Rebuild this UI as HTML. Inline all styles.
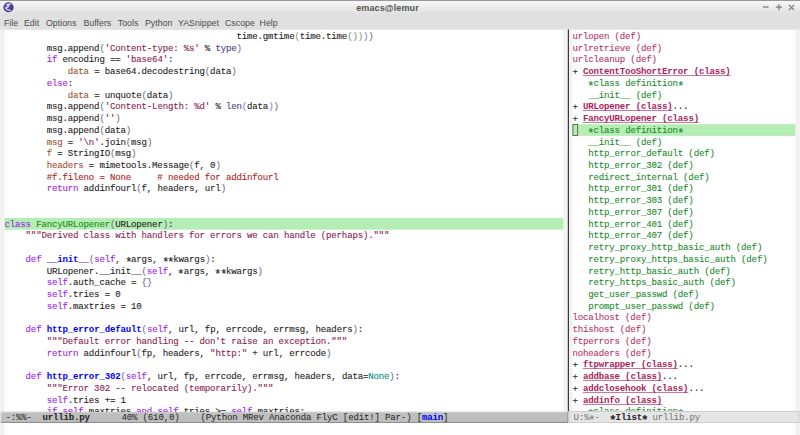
<!DOCTYPE html>
<html lang="en"><head><meta charset="utf-8"><title>emacs@lemur</title>
<style>
html,body{margin:0;padding:0}
body{width:800px;height:435px;overflow:hidden;position:relative;background:#fff;font-family:"Liberation Mono",monospace;font-size:9.1px;color:#222}
i{font-style:normal}
#ttl{position:absolute;left:327.5px;width:120px;top:2px;transform:translateY(0.6px);height:11px;line-height:11px;text-align:center;font-family:"Liberation Sans",sans-serif;font-weight:bold;font-size:9.1px;color:#555;letter-spacing:0.05px}
.mi{position:absolute;top:17px;transform:translateY(-0.5px);height:12px;line-height:12px;font-family:"Liberation Sans",sans-serif;font-size:8.8px;color:#4d4d4d;white-space:pre}
.pane{position:absolute;top:30px;height:382px;overflow:hidden}
#lp{left:4.5px;width:559px}
#rp{left:572.4px;width:223px;height:381px}
.ln{-webkit-text-stroke:0.1px;position:absolute;left:0;width:100%;height:11px;line-height:11px;white-space:pre;letter-spacing:-0.186px}
.k{color:#a020f0}
.s{color:#8b2252}
.c{color:#b22222}
.v{color:#a0522d}
.b{color:#483d8b}
.n{color:#008b8b}
.t{color:#228b22}
.f{color:#0000ff;font-weight:bold;-webkit-text-stroke:0}
.d{color:#b8336a}
.g{color:#208a2c}
.C{color:#ad1d5b;font-weight:bold;text-decoration:underline;text-decoration-color:rgba(173,29,91,0.6);text-decoration-skip-ink:none;text-decoration-thickness:1px;-webkit-text-stroke:0}
.ml{letter-spacing:-0.186px;position:absolute;top:412px;height:12px;line-height:12px;white-space:pre;box-sizing:border-box}
#ml1{left:1px;width:566.5px;padding-left:4.5px;color:#222;line-height:10px;padding-top:1px}
#ml2{left:568.5px;width:231px;padding-left:4.9px;color:#727272;line-height:10px;padding-top:1px}
.ml b{color:#222}
.ml .m{color:#0000ff;font-weight:bold}
.a{display:inline-block;transform-origin:50% 3.3px;transform:translateY(2.2px) scale(1.4)}
.p{position:relative;top:1px}

</style></head>
<body>
<svg id="bg" width="800" height="435" viewBox="0 0 800 435" style="position:absolute;left:0;top:0">
<defs><linearGradient id="tg" gradientUnits="userSpaceOnUse" x1="0" y1="0" x2="0" y2="30"><stop offset="0" stop-color="#f9f9f9"/><stop offset="0.05" stop-color="#f6f6f6"/><stop offset="0.47" stop-color="#e0e0e0"/><stop offset="1" stop-color="#e0e0e0"/></linearGradient></defs>
<rect x="0" y="0" width="800" height="29.8" fill="url(#tg)"/>
<rect x="0" y="0" width="800" height="0.9" fill="#8e8e8e"/>
<rect x="0" y="29.5" width="4.6" height="405.5" fill="#f2f2f2"/>
<rect x="563.4" y="29.5" width="4.4" height="382.3" fill="#f2f2f2"/>
<rect x="568.9" y="29.5" width="3.5" height="382.3" fill="#f2f2f2"/>
<rect x="795.4" y="29.5" width="4.6" height="405.5" fill="#f2f2f2"/>
<rect x="567.8" y="29.5" width="1.15" height="382" fill="#303030"/>
<rect x="4.6" y="217.95" width="558.8" height="11.7" fill="#b4eeb4"/>
<rect x="572.3" y="124.2" width="223.1" height="11.7" fill="#b4eeb4"/>
<rect x="572.95" y="124.5" width="4.75" height="11.1" fill="none" stroke="#3a3a3a" stroke-width="0.7"/>
<rect x="0.8" y="411.8" width="567.5" height="11.1" fill="#bfbfbf"/>
<rect x="0.8" y="411.8" width="567.5" height="0.9" fill="#d2d2d2"/>
<rect x="0.8" y="411.8" width="0.8" height="11.1" fill="#d2d2d2"/>
<rect x="0.8" y="421.9" width="567.5" height="1" fill="#8a8a8a"/>
<rect x="567.5" y="411.8" width="0.9" height="11.1" fill="#8a8a8a"/>
<rect x="568.6" y="411.2" width="230.8" height="11.6" fill="#e5e5e5"/>
<rect x="569" y="411.6" width="230" height="10.8" fill="none" stroke="#c6c6c6" stroke-width="0.8"/>
</svg>
<svg style="position:absolute;left:2.1px;top:1.2px" width="13" height="13" viewBox="0 0 13 13"><defs><radialGradient id="eg" cx="0.35" cy="0.3" r="0.8"><stop offset="0" stop-color="#6a5fc4"/><stop offset="0.6" stop-color="#4a3fa3"/><stop offset="1" stop-color="#2f2678"/></radialGradient></defs><circle cx="6.45" cy="6.25" r="5.1" fill="url(#eg)"/><path d="M8.4 3.1 L5.2 3.6 L6.7 5.3 L3.7 7 L5.4 8.8 L8.3 9.4" fill="none" stroke="#fff" stroke-opacity="0.92" stroke-width="1.15" stroke-linecap="round" stroke-linejoin="round"/></svg>
<div id="ttl">emacs@lemur</div>
<div class="mi" style="left:4px">File</div>
<div class="mi" style="left:24px">Edit</div>
<div class="mi" style="left:46px">Options</div>
<div class="mi" style="left:83.5px">Buffers</div>
<div class="mi" style="left:117.8px">Tools</div>
<div class="mi" style="left:145px">Python</div>
<div class="mi" style="left:178px">YASnippet</div>
<div class="mi" style="left:225px">Cscope</div>
<div class="mi" style="left:259.6px">Help</div>
<svg style="position:absolute;left:760px;top:1px" width="38" height="12" viewBox="0 0 38 12"><g stroke="#7a7a7a" stroke-width="1.25" fill="none"><path d="M3 6 H8.6"/><path d="M15.9 6.2 H21.9 M18.9 3.2 V9.2"/><path d="M28.9 3.9 L34.1 9.1 M34.1 3.9 L28.9 9.1"/></g></svg>

<div class="pane" id="lp">
<div class="ln" style="top:1px">                                            time.gmtime<i style="color:#909183">(</i>time.time<i style="color:#709870">(</i><i style="color:#709870">)</i><i style="color:#909183">)</i><i style="color:#7388d6">)</i><i style="color:#707183">)</i></div>
<div class="ln" style="top:13px">        msg.append<i style="color:#707183">(</i><span class="s">'Content-type: %s'</span> % <span class="b">type</span><i style="color:#707183">)</i></div>
<div class="ln" style="top:24px">        <span class="k">if</span> encoding == <span class="s">'base64'</span>:</div>
<div class="ln" style="top:36px">            <span class="v">data</span> = base64.decodestring<i style="color:#707183">(</i>data<i style="color:#707183">)</i></div>
<div class="ln" style="top:48px">        <span class="k">else</span>:</div>
<div class="ln" style="top:60px">            <span class="v">data</span> = unquote<i style="color:#707183">(</i>data<i style="color:#707183">)</i></div>
<div class="ln" style="top:71px">        msg.append<i style="color:#707183">(</i><span class="s">'Content-Length: %d'</span> % <span class="b">len</span><i style="color:#7388d6">(</i>data<i style="color:#7388d6">)</i><i style="color:#707183">)</i></div>
<div class="ln" style="top:83px">        msg.append<i style="color:#707183">(</i><span class="s">''</span><i style="color:#707183">)</i></div>
<div class="ln" style="top:95px">        msg.append<i style="color:#707183">(</i>data<i style="color:#707183">)</i></div>
<div class="ln" style="top:107px">        <span class="v">msg</span> = <span class="s">'\n'</span>.join<i style="color:#707183">(</i>msg<i style="color:#707183">)</i></div>
<div class="ln" style="top:118px">        <span class="v">f</span> = StringIO<i style="color:#707183">(</i>msg<i style="color:#707183">)</i></div>
<div class="ln" style="top:130px">        <span class="v">headers</span> = mimetools.Message<i style="color:#707183">(</i>f, 0<i style="color:#707183">)</i></div>
<div class="ln" style="top:142px">        <span class="c">#f.fileno = None     # needed for addinfourl</span></div>
<div class="ln" style="top:153px">        <span class="k">return</span> addinfourl<i style="color:#707183">(</i>f, headers, url<i style="color:#707183">)</i></div>
<div class="ln" style="top:189px"><span class="k">class</span> <span class="t">FancyURLopener</span><i style="color:#707183">(</i>URLopener<i style="color:#707183">)</i>:</div>
<div class="ln" style="top:200px">    <span class="s">"""Derived class with handlers for errors we can handle (perhaps)."""</span></div>
<div class="ln" style="top:224px">    <span class="k">def</span> <span class="f">__init__</span><i style="color:#707183">(</i><span class="k">self</span>, <i class="a">*</i>args, <i class="a">*</i><i class="a">*</i>kwargs<i style="color:#707183">)</i>:</div>
<div class="ln" style="top:236px">        URLopener.__init__<i style="color:#707183">(</i><span class="k">self</span>, <i class="a">*</i>args, <i class="a">*</i><i class="a">*</i>kwargs<i style="color:#707183">)</i></div>
<div class="ln" style="top:247px">        <span class="k">self</span>.auth_cache = <i style="color:#707183">{</i><i style="color:#707183">}</i></div>
<div class="ln" style="top:259px">        <span class="k">self</span>.tries = 0</div>
<div class="ln" style="top:271px">        <span class="k">self</span>.maxtries = 10</div>
<div class="ln" style="top:294px">    <span class="k">def</span> <span class="f">http_error_default</span><i style="color:#707183">(</i><span class="k">self</span>, url, fp, errcode, errmsg, headers<i style="color:#707183">)</i>:</div>
<div class="ln" style="top:306px">        <span class="s">"""Default error handling -- don't raise an exception."""</span></div>
<div class="ln" style="top:318px">        <span class="k">return</span> addinfourl<i style="color:#707183">(</i>fp, headers, <span class="s">"http:"</span> + url, errcode<i style="color:#707183">)</i></div>
<div class="ln" style="top:341px">    <span class="k">def</span> <span class="f">http_error_302</span><i style="color:#707183">(</i><span class="k">self</span>, url, fp, errcode, errmsg, headers, data=<span class="n">None</span><i style="color:#707183">)</i>:</div>
<div class="ln" style="top:353px">        <span class="s">"""Error 302 -- relocated (temporarily)."""</span></div>
<div class="ln" style="top:365px">        <span class="k">self</span>.tries += 1</div>
<div class="ln" style="top:376px">        <span class="k">if</span> <span class="k">self</span>.maxtries <span class="k">and</span> <span class="k">self</span>.tries &gt;= <span class="k">self</span>.maxtries:</div>
</div>
<div class="pane" id="rp">
<div class="ln" style="top:1px"><span class="d">urlopen (def)</span></div>
<div class="ln" style="top:13px"><span class="d">urlretrieve (def)</span></div>
<div class="ln" style="top:24px"><span class="d">urlcleanup (def)</span></div>
<div class="ln" style="top:36px"><i class="p">+</i> <span class="C">ContentTooShortError (class)</span></div>
<div class="ln" style="top:48px">   <span class="g"><i class="a">*</i>class definition<i class="a">*</i></span></div>
<div class="ln" style="top:60px">   <span class="g">__init__ (def)</span></div>
<div class="ln" style="top:71px"><i class="p">+</i> <span class="C">URLopener (class)</span>...</div>
<div class="ln" style="top:83px"><i class="p">+</i> <span class="C">FancyURLopener (class)</span></div>
<div class="ln" style="top:95px">   <span class="g"><i class="a">*</i>class definition<i class="a">*</i></span></div>
<div class="ln" style="top:107px">   <span class="g">__init__ (def)</span></div>
<div class="ln" style="top:118px">   <span class="g">http_error_default (def)</span></div>
<div class="ln" style="top:130px">   <span class="g">http_error_302 (def)</span></div>
<div class="ln" style="top:142px">   <span class="g">redirect_internal (def)</span></div>
<div class="ln" style="top:153px">   <span class="g">http_error_301 (def)</span></div>
<div class="ln" style="top:165px">   <span class="g">http_error_303 (def)</span></div>
<div class="ln" style="top:177px">   <span class="g">http_error_307 (def)</span></div>
<div class="ln" style="top:189px">   <span class="g">http_error_401 (def)</span></div>
<div class="ln" style="top:200px">   <span class="g">http_error_407 (def)</span></div>
<div class="ln" style="top:212px">   <span class="g">retry_proxy_http_basic_auth (def)</span></div>
<div class="ln" style="top:224px">   <span class="g">retry_proxy_https_basic_auth (def)</span></div>
<div class="ln" style="top:236px">   <span class="g">retry_http_basic_auth (def)</span></div>
<div class="ln" style="top:247px">   <span class="g">retry_https_basic_auth (def)</span></div>
<div class="ln" style="top:259px">   <span class="g">get_user_passwd (def)</span></div>
<div class="ln" style="top:271px">   <span class="g">prompt_user_passwd (def)</span></div>
<div class="ln" style="top:282px"><span class="d">localhost (def)</span></div>
<div class="ln" style="top:294px"><span class="d">thishost (def)</span></div>
<div class="ln" style="top:306px"><span class="d">ftperrors (def)</span></div>
<div class="ln" style="top:318px"><span class="d">noheaders (def)</span></div>
<div class="ln" style="top:329px"><i class="p">+</i> <span class="C">ftpwrapper (class)</span>...</div>
<div class="ln" style="top:341px"><i class="p">+</i> <span class="C">addbase (class)</span>...</div>
<div class="ln" style="top:353px"><i class="p">+</i> <span class="C">addclosehook (class)</span>...</div>
<div class="ln" style="top:365px"><i class="p">+</i> <span class="C">addinfo (class)</span></div>
<div class="ln" style="top:376px">   <span class="g"><i class="a">*</i>class definition<i class="a">*</i></span></div>
</div>
<div class="ml" id="ml1">-:%%-  <b>urllib.py</b>      40% (610,0)    (Python MRev Anaconda FlyC [edit!] Par-) [<span class="m">main</span>]</div>
<div class="ml" id="ml2">U:%<i class="a">*</i>-  <b><i class="a">*</i>Ilist<i class="a">*</i></b> urllib.py</div>

</body></html>
